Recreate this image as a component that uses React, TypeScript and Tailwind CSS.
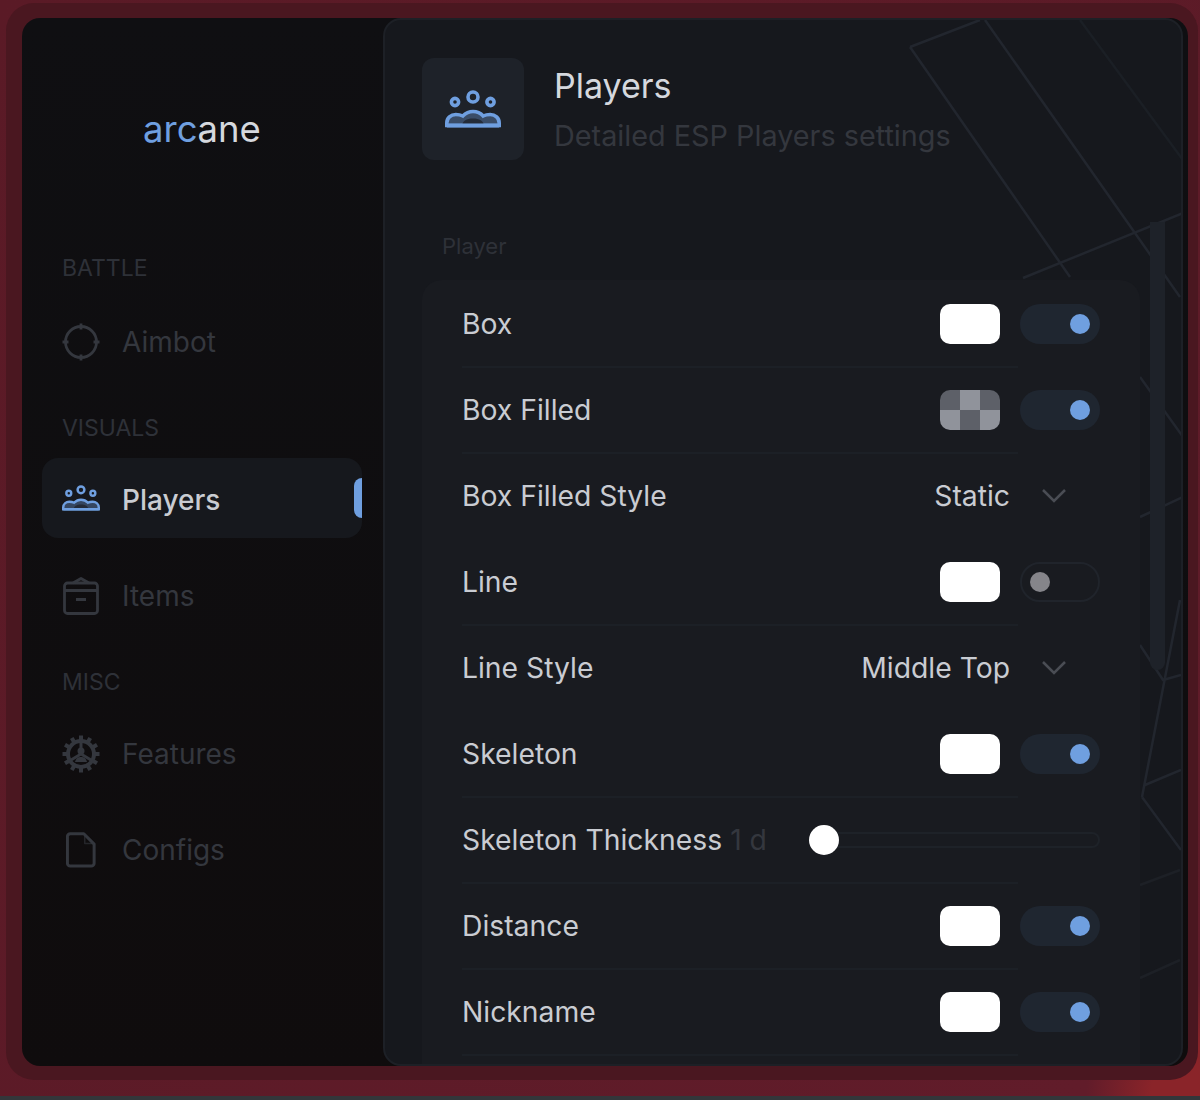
const F = "font-['Inter','Liberation_Sans',sans-serif]";

function PlayersIcon({ className }: { className: string }) {
  return (
    <svg viewBox="0 0 56 38" className={className} fill="none" stroke="currentColor" strokeWidth="3.6">
      <circle cx="28" cy="7" r="5" />
      <circle cx="10" cy="12" r="3.6" />
      <circle cx="45.500" cy="12" r="3.6" />
      <path d="M1.800 35.500v-2.500c0-5 4-8.500 9-8.500 3 0 5 .5 7 1.500 3-3 6.500-4.500 10.200-4.500s7.500 1.500 10.200 4.500c2-1 4-1.500 7-1.500 5 0 9 3.500 9 8.500v2.500z" fill="currentColor" fillOpacity="0.35" />
      <path d="M17 35.500c.5-4.500 4.500-7 11-7s10.500 2.500 11 7z" fill="#1e2229" stroke="none" opacity="0.75" />
      <path d="M1.800 35.500h52.400" strokeWidth="3.800" />
    </svg>
  );
}

function Crosshair({ className }: { className: string }) {
  return (
    <svg viewBox="0 0 38 38" className={className} fill="none" stroke="currentColor" strokeWidth="2.8">
      <circle cx="19" cy="19" r="15.500" />
      <path d="M19 .5v6M19 31.500v6M.5 19h6M31.500 19h6" />
    </svg>
  );
}

function BoxIcon({ className }: { className: string }) {
  return (
    <svg viewBox="0 0 36 38" className={className} fill="none" stroke="currentColor" strokeWidth="2.8" strokeLinejoin="round">
      <rect x="1.500" y="6" width="33" height="30.500" rx="3" />
      <path d="M1.500 13.500h33M10 6l8-4.500L26 6M13 22.500h10" />
    </svg>
  );
}

function GearIcon({ className }: { className: string }) {
  const teeth = Array.from({ length: 12 }, (_, i) => i * 30);
  return (
    <svg viewBox="0 0 38 38" className={className} fill="none" stroke="currentColor">
      <circle cx="19" cy="19" r="13" strokeWidth="4" />
      {teeth.map((a) => (
        <rect key={a} x="17" y="0.500" width="4" height="5" fill="currentColor" stroke="none" transform={`rotate(${a} 19 19)`} />
      ))}
      <path d="M19 19V8M19 19L9 25M19 19l10 6" strokeWidth="3" />
      <path d="M13 27c1-4 3-5 6-5s5 1 6 5z" fill="currentColor" stroke="none" />
      <circle cx="19" cy="16" r="3.500" fill="currentColor" stroke="none" />
    </svg>
  );
}

function FileIcon({ className }: { className: string }) {
  return (
    <svg viewBox="0 0 32 38" className={className} fill="none" stroke="currentColor" strokeWidth="3.2" strokeLinejoin="round">
      <path d="M4.500 1.700h14.500l11 11V33a3 3 0 0 1-3 3H4.500a3 3 0 0 1-3-3V4.700a3 3 0 0 1 3-3z" />
      <path d="M20 3v9h9" strokeWidth="1.600" opacity="0.6" />
    </svg>
  );
}

function Toggle({ on }: { on: boolean }) {
  return on ? (
    <div className="flex h-10 w-20 items-center justify-end rounded-full bg-[#1f2630] pr-[10px]">
      <div className="h-5 w-5 rounded-full bg-[#6f9fe0]" />
    </div>
  ) : (
    <div className="flex h-10 w-20 items-center rounded-full border-2 border-[#20242b] pl-2">
      <div className="h-5 w-5 rounded-full bg-[#85858a]" />
    </div>
  );
}

function Swatch({ checker }: { checker?: boolean }) {
  if (!checker) return <div className="h-10 w-[60px] rounded-[10px] bg-white" />;
  return (
    <div className="grid h-10 w-[60px] grid-cols-3 grid-rows-2 overflow-hidden rounded-[10px]">
      <div className="bg-[#5d6068]" />
      <div className="bg-[#90939b]" />
      <div className="bg-[#5d6068]" />
      <div className="bg-[#90939b]" />
      <div className="bg-[#5d6068]" />
      <div className="bg-[#90939b]" />
    </div>
  );
}

function Row({ label, divider = true, children }: { label: React.ReactNode; divider?: boolean; children: React.ReactNode }) {
  return (
    <div className="relative flex h-[86px] items-center justify-between">
      <div className="text-[28.300px] leading-8 text-[#c9ccd2]">{label}</div>
      {children}
      {divider && <div className="absolute -bottom-px left-0 h-0.5 w-[556px] bg-[#1c2026]" />}
    </div>
  );
}

function ColorToggleRow({ label, on = true, checker }: { label: string; on?: boolean; checker?: boolean }) {
  return (
    <Row label={label}>
      <div className="flex items-center gap-5">
        <Swatch checker={checker} />
        <Toggle on={on} />
      </div>
    </Row>
  );
}

function SelectRow({ label, value }: { label: string; value: string }) {
  return (
    <Row label={label} divider={false}>
      <div className="flex items-center gap-[31px] pr-[33px]">
        <span className="text-[28.300px] leading-8 text-[#c9ccd2]">{value}</span>
        <svg viewBox="0 0 26 16" className="h-4 w-[26px]" fill="none" stroke="#4a4d54" strokeWidth="2.500">
          <path d="M2 2l11 11L24 2" />
        </svg>
      </div>
    </Row>
  );
}

function Section({ children }: { children: string }) {
  return <div className="text-[23px] leading-7 text-[#2e3138]">{children}</div>;
}

function NavItem({ icon, label, active }: { icon: React.ReactNode; label: string; active?: boolean }) {
  return (
    <div className={`relative flex h-20 items-center gap-[22px] rounded-2xl px-5 ${active ? "bg-[#16181d]" : ""}`}>
      <div className={`flex w-[38px] justify-center ${active ? "text-[#6f9fe0]" : "text-[#34373e]"}`}>{icon}</div>
      <span className={`text-[28px] ${active ? "mt-1 font-medium text-[#c9ccd2]" : "text-[#34373e]"}`}>{label}</span>
      {active && <div className="absolute right-0 top-5 h-10 w-2 rounded-l-lg bg-[#6f9fe0]" />}
    </div>
  );
}

export default function App() {
  return (
    <div className={`h-[1100px] w-[1200px] overflow-hidden bg-[#33363a] ${F}`}>
      <div className="h-[1096px] w-full bg-[#5c1b28] bg-[radial-gradient(circle_at_100%_100%,#8a2429_0,#8a2429_3%,#611c2a_7%,#5a1a26_100%)] pl-[6px] pr-[2px] pt-[3px]">
        <div className="h-[1077px] w-full rounded-[28px] bg-[#4a1720] pl-4 pr-[10px] pt-[15px]">
          <div className="flex h-[1048px] w-full overflow-hidden rounded-[18px] bg-gradient-to-b from-[#0f0f12] to-[#0f0c0d]">
            <aside className="flex w-[361px] shrink-0 flex-col pl-5 pr-[21px]">
              <div className="flex h-[222px] items-center justify-center text-[36.5px]">
                <span className="text-[#6f9fe0]">arc</span>
                <span className="text-[#d5d8de]">ane</span>
              </div>
              <div className="pl-5 pt-[14px]"><Section>BATTLE</Section></div>
              <div className="mt-5">
                <NavItem label="Aimbot" icon={<Crosshair className="h-[38px] w-[38px]" />} />
              </div>
              <div className="mt-8 pl-5"><Section>VISUALS</Section></div>
              <div className="mt-4">
                <NavItem active label="Players" icon={<PlayersIcon className="h-[26px] w-[38px]" />} />
              </div>
              <div className="mt-[18px]">
                <NavItem label="Items" icon={<BoxIcon className="h-[38px] w-9" />} />
              </div>
              <div className="mt-8 pl-5"><Section>MISC</Section></div>
              <div className="mt-[18px]">
                <NavItem label="Features" icon={<GearIcon className="h-[38px] w-[38px]" />} />
              </div>
              <div className="mt-4">
                <NavItem label="Configs" icon={<FileIcon className="h-[38px] w-[30px]" />} />
              </div>
            </aside>
            <main className="relative w-[800px] shrink-0 overflow-hidden rounded-[18px] border-2 border-[#1d2026] bg-[#16181d]">
              <svg className="absolute inset-0 h-full w-full" viewBox="2 2 796 1044" fill="none" stroke="#22262e" strokeWidth="2.500">
                <path d="M527 29L597 2M527 29L687 259M602 2L797 279" />
                <path d="M640 260L800 195" />
                <path d="M697 2L800 142" stroke="#1b1f25" />
                <path d="M757 359L800 419M757 499L800 479" />
                <path d="M797 582L759 779M762 767L798 752M759 779L798 832" />
                <path d="M757 627L780 662L798 657" />
                <path d="M757 867L797 852M757 960L797 942" stroke="#1d2026" />
              </svg>
              <div className="absolute right-4 top-[202px] h-[448px] w-[15px] rounded-b-lg bg-[#1e2229]" />
              <div className="relative pl-[37px] pt-[38px]">
                <div className="flex items-start gap-[30px]">
                  <div className="flex h-[102px] w-[102px] items-center justify-center rounded-xl bg-[#1e2229] text-[#6f9fe0]">
                    <PlayersIcon className="h-[38px] w-14" />
                  </div>
                  <div className="pt-2">
                    <div className="text-[34px] leading-10 text-[#d5d8de]">Players</div>
                    <div className="mt-[14px] text-[28.800px] leading-8 text-[#34373e]">Detailed ESP Players settings</div>
                  </div>
                </div>
                <div className="mt-[72px] pl-5 text-[22px] leading-7 text-[#2e3138]">Player</div>
                <div className="mt-5 h-[900px] w-[718px] rounded-[20px] bg-[#191b20] px-10 pt-px">
                  <ColorToggleRow label="Box" />
                  <ColorToggleRow label="Box Filled" checker />
                  <SelectRow label="Box Filled Style" value="Static" />
                  <ColorToggleRow label="Line" on={false} />
                  <SelectRow label="Line Style" value="Middle Top" />
                  <ColorToggleRow label="Skeleton" />
                  <Row label={<>Skeleton Thickness <span className="text-[#34373e]">1 d</span></>}>
                    <div className="relative flex h-[30px] w-[291px] items-center">
                      <div className="h-4 w-full rounded-full border-2 border-[#1e2228]" />
                      <div className="absolute left-0 h-[30px] w-[30px] rounded-full bg-white" />
                    </div>
                  </Row>
                  <ColorToggleRow label="Distance" />
                  <ColorToggleRow label="Nickname" />
                </div>
              </div>
            </main>
          </div>
        </div>
      </div>
    </div>
  );
}
